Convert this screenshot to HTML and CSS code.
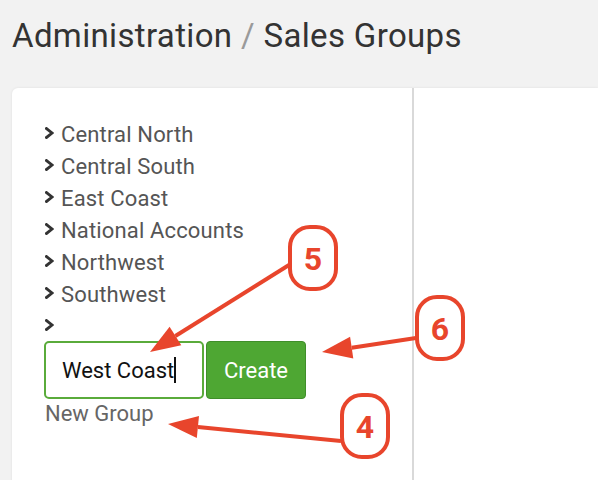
FILE: index.html
```html
<!DOCTYPE html>
<html>
<head>
<meta charset="utf-8">
<link rel="stylesheet" href="styles.css">
</head>
<body>
<header class="page-head">
  <h1 class="title">Administration <span class="sep">/</span> Sales Groups</h1>
</header>
<main class="panel">
  <section class="groups">
    <ul class="group-list">
      <li class="group"><svg class="chev" viewBox="0 0 9 12"><polyline points="1.5,1.5 7,6 1.5,10.5"/></svg><span>Central North</span></li>
      <li class="group"><svg class="chev" viewBox="0 0 9 12"><polyline points="1.5,1.5 7,6 1.5,10.5"/></svg><span>Central South</span></li>
      <li class="group"><svg class="chev" viewBox="0 0 9 12"><polyline points="1.5,1.5 7,6 1.5,10.5"/></svg><span>East Coast</span></li>
      <li class="group"><svg class="chev" viewBox="0 0 9 12"><polyline points="1.5,1.5 7,6 1.5,10.5"/></svg><span>National Accounts</span></li>
      <li class="group"><svg class="chev" viewBox="0 0 9 12"><polyline points="1.5,1.5 7,6 1.5,10.5"/></svg><span>Northwest</span></li>
      <li class="group"><svg class="chev" viewBox="0 0 9 12"><polyline points="1.5,1.5 7,6 1.5,10.5"/></svg><span>Southwest</span></li>
      <li class="group"><svg class="chev" viewBox="0 0 9 12"><polyline points="1.5,1.5 7,6 1.5,10.5"/></svg></li>
    </ul>
    <div class="new-row">
      <div class="field"><span class="field-text">West Coast</span><span class="caret"></span></div>
      <button class="btn-create" type="button">Create</button>
    </div>
    <div class="new-link">New Group</div>
  </section>
  <section class="detail"></section>
</main>
<svg class="notes" width="598" height="480" viewBox="0 0 598 480">
  <g class="note-stroke">
    <rect x="290" y="227" width="46" height="62" rx="20"/>
    <rect x="417" y="297" width="46" height="62" rx="20"/>
    <rect x="342" y="395" width="46" height="62" rx="20"/>
    <line x1="289" y1="265" x2="175.4" y2="336"/>
    <line x1="416" y1="338" x2="351.7" y2="347.7"/>
    <line x1="341" y1="441" x2="197.9" y2="427"/>
  </g>
  <g class="note-fill">
    <polygon points="150,352 181.3,345.3 169.6,326.7"/>
    <polygon points="322,352 353.3,358.6 350.1,336.8"/>
    <polygon points="168,424 196.8,437.9 199,416"/>
  </g>
  <g class="note-num">
    <text x="313" y="270">5</text>
    <text x="440" y="340">6</text>
    <text x="365" y="438">4</text>
  </g>
</svg>
</body>
</html>
```
FILE: styles.css
```css
html, body {
  margin: 0;
  padding: 0;
}
body {
  background: #f2f2f2;
  font-family: Roboto, "Liberation Sans", sans-serif;
  width: 598px;
  height: 480px;
  overflow: hidden;
  position: relative;
}
.page-head {
  padding: 17px 0 0 12px;
}
.title {
  margin: 0;
  font-size: 33px;
  letter-spacing: 0.35px;
  line-height: 38px;
  font-weight: 400;
  color: #333;
}
.sep {
  color: #9a9a9a;
}
.panel {
  margin: 33px 0 0 12px;
  background: #fff;
  border-radius: 6px 0 0 0;
  box-shadow: 0 0 3px rgba(0, 0, 0, 0.08);
  display: flex;
  height: 400px;
}
.groups {
  width: 402px;
  box-sizing: border-box;
  padding: 31px 0 0 32px;
  border-right: 2px solid #d9d9d9;
}
.detail {
  flex: 1;
}
.group-list {
  list-style: none;
  margin: 0;
  padding: 0;
}
.group {
  display: flex;
  align-items: center;
  height: 32px;
  font-size: 22px;
  letter-spacing: 0.15px;
  line-height: 32px;
  color: #555;
  padding-left: 1px;
}
.chev {
  width: 9px;
  height: 12px;
  margin-right: 7px;
  margin-top: -4px;
  flex: none;
}
.chev polyline {
  fill: none;
  stroke: #333;
  stroke-width: 2.9;
  stroke-linecap: square;
  stroke-linejoin: miter;
}
.new-row {
  display: flex;
  gap: 2px;
  margin-top: -2px;
}
.field {
  width: 160px;
  height: 58px;
  box-sizing: border-box;
  border: 2px solid #5aab3b;
  border-radius: 5px;
  display: flex;
  align-items: center;
  padding-left: 16px;
  font-size: 22px;
  color: #111;
}
.caret {
  display: inline-block;
  width: 1.5px;
  height: 26px;
  background: #111;
}
.btn-create {
  width: 100px;
  height: 58px;
  box-sizing: border-box;
  background: #4ea733;
  border: 1px solid #3f8e2a;
  border-radius: 4px;
  color: #fff;
  font-family: Roboto, "Liberation Sans", sans-serif;
  font-size: 22px;
  padding: 0;
}
.new-link {
  font-size: 22px;
  line-height: 32px;
  color: #666;
  padding-left: 1px;
  margin-top: -1px;
}
.notes {
  position: absolute;
  left: 0;
  top: 0;
  pointer-events: none;
}
.note-stroke rect {
  fill: #fff;
  stroke: #e8452c;
  stroke-width: 4;
}
.note-stroke line {
  stroke: #e8452c;
  stroke-width: 4;
}
.note-fill polygon {
  fill: #e8452c;
}
.note-num text {
  fill: #e8452c;
  font-family: Roboto, "Liberation Sans", sans-serif;
  font-weight: 700;
  font-size: 32px;
  text-anchor: middle;
}
```
